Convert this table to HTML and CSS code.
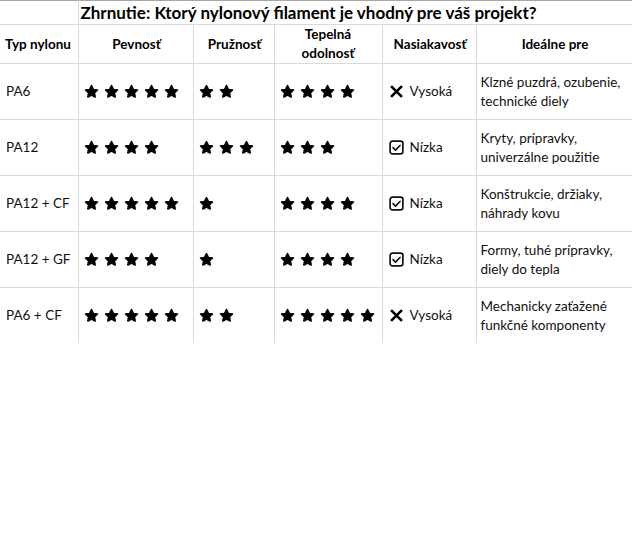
FILE: index.html
```html
<!DOCTYPE html>
<html lang="sk">
<head>
<meta charset="utf-8">
<title>Zhrnutie</title>
<link rel="stylesheet" href="styles.css">
</head>
<body>
<svg width="0" height="0" class="defs" aria-hidden="true">
  <defs>
    <symbol id="star" viewBox="0 0 24 24">
      <path d="M12 2.6l2.9 6.1 6.6.8-4.9 4.6 1.3 6.6L12 17.5l-5.9 3.2 1.3-6.6-4.9-4.6 6.6-.8z" fill="#000" stroke="#000" stroke-width="2.6" stroke-linejoin="round"/>
    </symbol>
    <symbol id="cross" viewBox="0 0 16 16">
      <path d="M2.2 2.2l11.6 11.6M13.8 2.2l-11.6 11.6" stroke="#000" stroke-width="2.8" stroke-linecap="butt" fill="none"/>
    </symbol>
    <symbol id="check" viewBox="0 0 16 16">
      <rect x="1.2" y="1.2" width="13.6" height="13.6" rx="2.6" fill="none" stroke="#111" stroke-width="1.8"/>
      <path d="M4.3 8.2l2.6 2.6 4.9-5" fill="none" stroke="#111" stroke-width="1.7" stroke-linecap="round" stroke-linejoin="round"/>
    </symbol>
  </defs>
</svg>
<table class="summary">
  <colgroup>
    <col class="c1"><col class="c2"><col class="c3"><col class="c4"><col class="c5"><col class="c6">
  </colgroup>
  <tr class="title-row">
    <td class="blank"></td>
    <td class="title" colspan="5">Zhrnutie: Ktorý nylonový filament je vhodný pre váš projekt?</td>
  </tr>
  <tr class="head-row">
    <th>Typ nylonu</th>
    <th>Pevnosť</th>
    <th>Pružnosť</th>
    <th class="narrow">Tepelná odolnosť</th>
    <th>Nasiakavosť</th>
    <th>Ideálne pre</th>
  </tr>
  <tr>
    <td>PA6</td>
    <td><span class="stars"><svg><use href="#star"/></svg><svg><use href="#star"/></svg><svg><use href="#star"/></svg><svg><use href="#star"/></svg><svg><use href="#star"/></svg></span></td>
    <td><span class="stars"><svg><use href="#star"/></svg><svg><use href="#star"/></svg></span></td>
    <td><span class="stars"><svg><use href="#star"/></svg><svg><use href="#star"/></svg><svg><use href="#star"/></svg><svg><use href="#star"/></svg></span></td>
    <td><span class="abs"><svg class="ic"><use href="#cross"/></svg>Vysoká</span></td>
    <td>Klzné puzdrá, ozubenie, technické diely</td>
  </tr>
  <tr>
    <td>PA12</td>
    <td><span class="stars"><svg><use href="#star"/></svg><svg><use href="#star"/></svg><svg><use href="#star"/></svg><svg><use href="#star"/></svg></span></td>
    <td><span class="stars"><svg><use href="#star"/></svg><svg><use href="#star"/></svg><svg><use href="#star"/></svg></span></td>
    <td><span class="stars"><svg><use href="#star"/></svg><svg><use href="#star"/></svg><svg><use href="#star"/></svg></span></td>
    <td><span class="abs"><svg class="ic"><use href="#check"/></svg>Nízka</span></td>
    <td>Kryty, prípravky, univerzálne použitie</td>
  </tr>
  <tr>
    <td>PA12 + CF</td>
    <td><span class="stars"><svg><use href="#star"/></svg><svg><use href="#star"/></svg><svg><use href="#star"/></svg><svg><use href="#star"/></svg><svg><use href="#star"/></svg></span></td>
    <td><span class="stars"><svg><use href="#star"/></svg></span></td>
    <td><span class="stars"><svg><use href="#star"/></svg><svg><use href="#star"/></svg><svg><use href="#star"/></svg><svg><use href="#star"/></svg></span></td>
    <td><span class="abs"><svg class="ic"><use href="#check"/></svg>Nízka</span></td>
    <td>Konštrukcie, držiaky, náhrady kovu</td>
  </tr>
  <tr>
    <td>PA12 + GF</td>
    <td><span class="stars"><svg><use href="#star"/></svg><svg><use href="#star"/></svg><svg><use href="#star"/></svg><svg><use href="#star"/></svg></span></td>
    <td><span class="stars"><svg><use href="#star"/></svg></span></td>
    <td><span class="stars"><svg><use href="#star"/></svg><svg><use href="#star"/></svg><svg><use href="#star"/></svg><svg><use href="#star"/></svg></span></td>
    <td><span class="abs"><svg class="ic"><use href="#check"/></svg>Nízka</span></td>
    <td>Formy, tuhé prípravky, diely do tepla</td>
  </tr>
  <tr class="last">
    <td>PA6 + CF</td>
    <td><span class="stars"><svg><use href="#star"/></svg><svg><use href="#star"/></svg><svg><use href="#star"/></svg><svg><use href="#star"/></svg><svg><use href="#star"/></svg></span></td>
    <td><span class="stars"><svg><use href="#star"/></svg><svg><use href="#star"/></svg></span></td>
    <td><span class="stars"><svg><use href="#star"/></svg><svg><use href="#star"/></svg><svg><use href="#star"/></svg><svg><use href="#star"/></svg><svg><use href="#star"/></svg></span></td>
    <td><span class="abs"><svg class="ic"><use href="#cross"/></svg>Vysoká</span></td>
    <td>Mechanicky zaťažené funkčné komponenty</td>
  </tr>
</table>
</body>
</html>
```
FILE: styles.css
```css
html, body {
  margin: 0;
  padding: 0;
  background: #fff;
}
body {
  font-family: Lato, "Open Sans", "Liberation Sans", sans-serif;
  font-size: 13.5px;
  color: #111;
}
.defs {
  position: absolute;
  width: 0;
  height: 0;
  overflow: hidden;
}
.summary {
  border-collapse: collapse;
  table-layout: fixed;
  width: 632px;
}
.c1 { width: 78px; }
.c2 { width: 115px; }
.c3 { width: 81px; }
.c4 { width: 108px; }
.c5 { width: 94px; }
.c6 { width: 156px; }

.summary td, .summary th {
  border: 1px solid #d9d9d9;
  padding: 0 2px 0 4px;
  vertical-align: middle;
  text-align: left;
  line-height: 19px;
}
.summary tr > :first-child {
  border-left: none;
  padding-left: 6px;
}
.title-row td {
  height: 23px;
  border-top: 1px solid #a6a6a6;
}
.title-row .blank {
  border-right: 1px solid #d9d9d9;
}
.summary .title {
  font-size: 17px;
  font-weight: 700;
  line-height: 22px;
  padding-left: 2px;
  white-space: nowrap;
  color: #000;
}
.head-row th {
  height: 38px;
  font-size: 13.5px;
  font-weight: 700;
  text-align: center;
  color: #000;
}
.head-row th:first-child {
  text-align: left;
  padding-left: 5px;
}
.summary .head-row th.narrow {
  padding: 0 20px;
}
.summary tr:not(.title-row):not(.head-row) td {
  height: 55px;
}
.summary tr.last td {
  border-bottom: none;
}
.stars {
  display: flex;
  gap: 5px;
  align-items: center;
  padding-left: 1px;
}
.stars svg {
  width: 15px;
  height: 15px;
  display: block;
}
.abs {
  display: flex;
  align-items: center;
  gap: 6px;
  padding-left: 2px;
}
.ic {
  width: 15px;
  height: 15px;
  display: block;
  flex: none;
}
```
